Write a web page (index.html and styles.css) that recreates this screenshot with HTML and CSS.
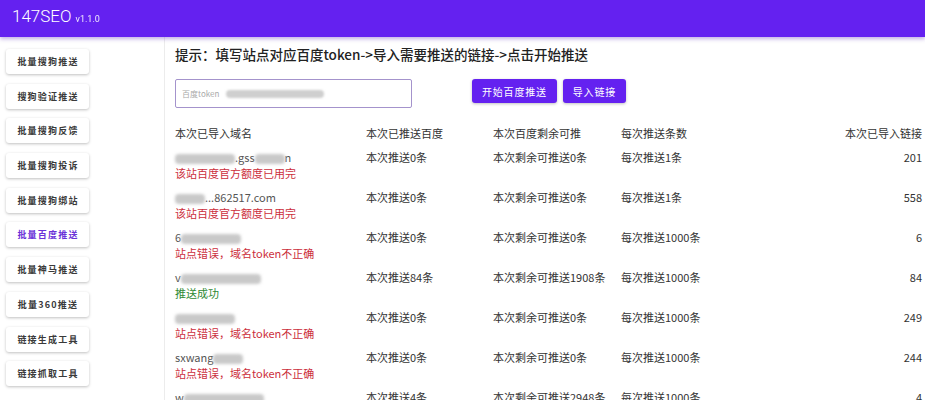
FILE: index.html
```html
<!DOCTYPE html>
<html>
  <head>
    <title>147SEO</title>
    <link rel="stylesheet" href="styles.css">
  </head>
  <body>
    <header class="topbar">
      <span class="logo">147SEO</span>
      <span class="version">v1.1.0</span>
    </header>
    <div class="main">
      <nav class="sidebar">
        <button class="nav-btn">批量搜狗推送</button>
        <button class="nav-btn">搜狗验证推送</button>
        <button class="nav-btn">批量搜狗反馈</button>
        <button class="nav-btn">批量搜狗投诉</button>
        <button class="nav-btn">批量搜狗绑站</button>
        <button class="nav-btn active">批量百度推送</button>
        <button class="nav-btn">批量神马推送</button>
        <button class="nav-btn">批量360推送</button>
        <button class="nav-btn">链接生成工具</button>
        <button class="nav-btn">链接抓取工具</button>
      </nav>
      <section class="content">
        <h2 class="tip">提示：填写站点对应百度token-&gt;导入需要推送的链接-&gt;点击开始推送</h2>
        <div class="toolbar">
          <div class="token-input">
            <span class="placeholder">百度token</span>
            <span class="masked"></span>
          </div>
          <div class="actions">
            <button class="primary">开始百度推送</button>
            <button class="primary">导入链接</button>
          </div>
        </div>
        <div class="results">
          <div class="row head">
            <div>本次已导入域名</div>
            <div>本次已推送百度</div>
            <div>本次百度剩余可推</div>
            <div>每次推送条数</div>
            <div class="num">本次已导入链接</div>
          </div>
          <div class="row">
            <div><span class="domain"><span class="fog w60"></span>.gss<span class="fog w30"></span>n</span><span class="status err">该站百度官方额度已用完</span></div>
            <div>本次推送0条</div>
            <div>本次剩余可推送0条</div>
            <div>每次推送1条</div>
            <div class="num">201</div>
          </div>
          <div class="row">
            <div><span class="domain"><span class="fog w30"></span>...862517.com</span><span class="status err">该站百度官方额度已用完</span></div>
            <div>本次推送0条</div>
            <div>本次剩余可推送0条</div>
            <div>每次推送1条</div>
            <div class="num">558</div>
          </div>
          <div class="row">
            <div><span class="domain">6<span class="fog w60"></span></span><span class="status err">站点错误，域名token不正确</span></div>
            <div>本次推送0条</div>
            <div>本次剩余可推送0条</div>
            <div>每次推送1000条</div>
            <div class="num">6</div>
          </div>
          <div class="row">
            <div><span class="domain">v<span class="fog w80"></span></span><span class="status ok">推送成功</span></div>
            <div>本次推送84条</div>
            <div>本次剩余可推送1908条</div>
            <div>每次推送1000条</div>
            <div class="num">84</div>
          </div>
          <div class="row">
            <div><span class="domain"><span class="fog w60"></span></span><span class="status err">站点错误，域名token不正确</span></div>
            <div>本次推送0条</div>
            <div>本次剩余可推送0条</div>
            <div>每次推送1000条</div>
            <div class="num">249</div>
          </div>
          <div class="row">
            <div><span class="domain">sxwang<span class="fog w30"></span></span><span class="status err">站点错误，域名token不正确</span></div>
            <div>本次推送0条</div>
            <div>本次剩余可推送0条</div>
            <div>每次推送1000条</div>
            <div class="num">244</div>
          </div>
          <div class="row">
            <div><span class="domain">w<span class="fog w80"></span></span><span class="status ok">推送成功</span></div>
            <div>本次推送4条</div>
            <div>本次剩余可推送2948条</div>
            <div>每次推送1000条</div>
            <div class="num">4</div>
          </div>
        </div>
      </section>
    </div>
  </body>
</html>
```

FILE: styles.css
```css
body {
  margin: 0;
  font-family: "Noto Sans CJK SC", "Noto Sans", sans-serif;
  color: #333;
  background: #fff;
  overflow: hidden;
}

.topbar {
  height: 37px;
  background-color: #6421f0;
  color: #fff;
  display: flex;
  align-items: baseline;
  padding-left: 12px;
  box-shadow: 0 2px 4px rgba(80, 30, 180, 0.35);
  position: relative;
}

.logo {
  font-family: Roboto, sans-serif;
  font-size: 17px;
  font-weight: 300;
  line-height: 33px;
}

.version {
  font-family: Roboto, sans-serif;
  font-size: 9px;
  margin-left: 4px;
  opacity: 0.9;
}

.main {
  display: flex;
}

.sidebar {
  width: 165px;
  flex: none;
  border-right: 1px solid #ececec;
  padding: 12px 0 0 6px;
  box-sizing: border-box;
  display: flex;
  flex-direction: column;
  align-items: flex-start;
  gap: 9.7px;
  height: 363px;
}

.nav-btn {
  width: 83px;
  height: 25px;
  border: none;
  border-radius: 3px;
  background: #fff;
  box-shadow: 0 1px 3px rgba(0, 0, 0, 0.25);
  font-family: "Noto Sans CJK SC", sans-serif;
  font-size: 9px;
  font-weight: 700;
  letter-spacing: 1.2px;
  color: #3a3a3a;
  padding: 0 0 0 1px;
}

.nav-btn.active {
  color: #6a32d8;
}

.content {
  flex: 1;
  padding: 6px 3px 0 10px;
}

.tip {
  margin: 0;
  font-size: 13.5px;
  font-weight: 500;
  line-height: 22px;
  color: #222;
}

.toolbar {
  display: flex;
  align-items: flex-start;
  margin-top: 14px;
}

.token-input {
  width: 237px;
  height: 29px;
  box-sizing: border-box;
  border: 1.5px solid #a493cc;
  border-radius: 2px;
  display: flex;
  align-items: center;
  padding-left: 6px;
}

.placeholder {
  font-size: 8px;
  color: #aaa;
}

.masked {
  display: inline-block;
  width: 98px;
  height: 8px;
  margin-left: 7px;
  border-radius: 4px;
  background: #cfcfcf;
  filter: blur(1.2px);
}

.actions {
  display: flex;
  gap: 6px;
  margin-left: 60px;
}

.primary {
  height: 24px;
  padding: 0 10px;
  border: none;
  border-radius: 3px;
  background-color: #6421f0;
  color: #fff;
  font-family: "Noto Sans CJK SC", sans-serif;
  font-size: 10px;
  letter-spacing: 0.8px;
  box-shadow: 0 1px 3px rgba(0, 0, 0, 0.25);
}

.results {
  margin-top: 17px;
  font-size: 11px;
}

.row {
  display: grid;
  grid-template-columns: 191px 127px 128px 1fr auto;
  line-height: 16px;
  padding-bottom: 8px;
  white-space: nowrap;
}

.num {
  text-align: right;
}

.domain,
.status {
  display: block;
}

.domain {
  color: #555;
}

.status.err {
  color: #cc2e3c;
}

.status.ok {
  color: #2f8a34;
}

.fog {
  display: inline-block;
  height: 10px;
  vertical-align: middle;
  border-radius: 4px;
  background: #c9c9c9;
  filter: blur(1.5px);
}

.w30 {
  width: 30px;
}

.w60 {
  width: 60px;
}

.w80 {
  width: 80px;
}
```
